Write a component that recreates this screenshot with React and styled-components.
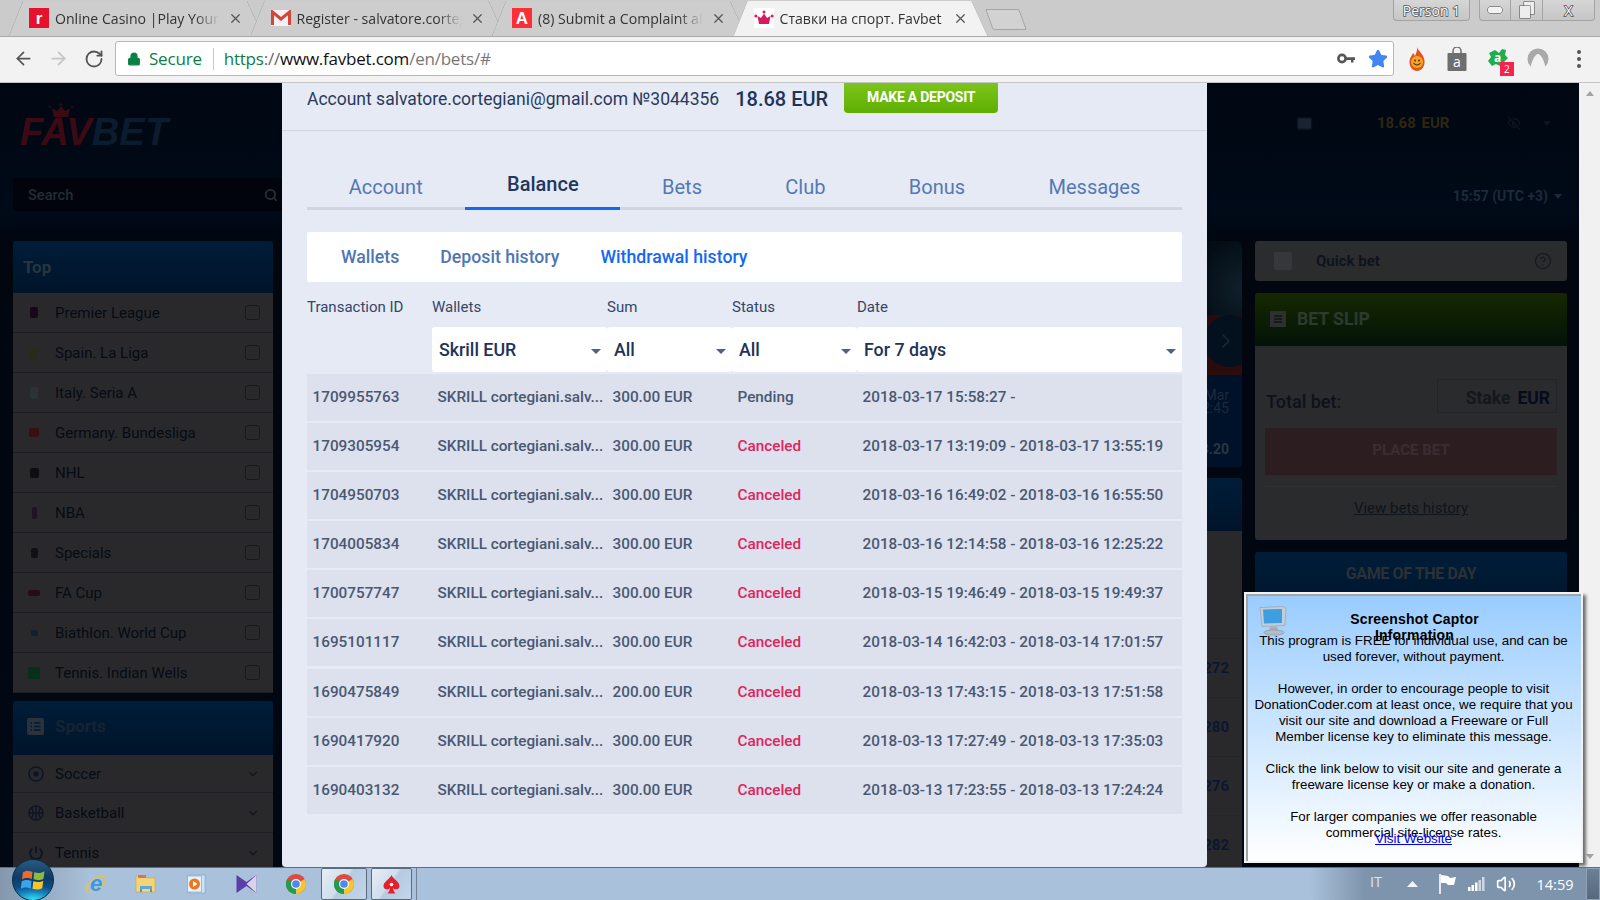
import styled, { createGlobalStyle } from 'styled-components';
import { ArrowLeft, ArrowRight, RotateCw, Lock, Star, X, Search as SearchIcon, Mail, EyeOff, ChevronRight, ChevronDown, CircleHelp, Volume2 } from 'lucide-react';

const Global = createGlobalStyle`
  html, body { margin: 0; padding: 0; background: #000; }
  * { box-sizing: border-box; }
  body { font-family: Roboto, "Liberation Sans", sans-serif; }
`;

const ROWS = [
  ['1709955763', '300.00 EUR', 'Pending', '2018-03-17 15:58:27 -'],
  ['1709305954', '300.00 EUR', 'Canceled', '2018-03-17 13:19:09 - 2018-03-17 13:55:19'],
  ['1704950703', '300.00 EUR', 'Canceled', '2018-03-16 16:49:02 - 2018-03-16 16:55:50'],
  ['1704005834', '300.00 EUR', 'Canceled', '2018-03-16 12:14:58 - 2018-03-16 12:25:22'],
  ['1700757747', '300.00 EUR', 'Canceled', '2018-03-15 19:46:49 - 2018-03-15 19:49:37'],
  ['1695101117', '300.00 EUR', 'Canceled', '2018-03-14 16:42:03 - 2018-03-14 17:01:57'],
  ['1690475849', '200.00 EUR', 'Canceled', '2018-03-13 17:43:15 - 2018-03-13 17:51:58'],
  ['1690417920', '300.00 EUR', 'Canceled', '2018-03-13 17:27:49 - 2018-03-13 17:35:03'],
  ['1690403132', '300.00 EUR', 'Canceled', '2018-03-13 17:23:55 - 2018-03-13 17:24:24'],
];

const TOP = [
  ['Premier League', '#160818', 8, 11],
  ['Spain. La Liga', '#2a2a1a', 8, 12],
  ['Italy. Seria A', '#2a3438', 8, 12],
  ['Germany. Bundesliga', '#3a0f12', 10, 9],
  ['NHL', '#0c0e12', 9, 10],
  ['NBA', '#1e1424', 5, 12],
  ['Specials', '#0f1114', 7, 10],
  ['FA Cup', '#2a0a14', 12, 6],
  ['Biathlon. World Cup', '#0c2230', 7, 6],
  ['Tennis. Indian Wells', '#04301c', 12, 12],
];

const Screen = styled.div`
  position: relative;
  width: 1600px;
  height: 900px;
  overflow: hidden;
  display: flex;
  flex-direction: column;
`;

/* browser chrome */
const TabStrip = styled.div`
  height: 36px;
  flex: none;
  background: #cbcbcb;
  display: flex;
  padding-left: 9px;
`;

const Tab = styled.div`
  position: relative;
  width: 256px;
  height: 36px;
  margin-right: -14.5px;
  display: flex;
  align-items: center;
  padding: 0 20px;
  z-index: ${p => (p.$active ? 2 : 1)};
  filter: drop-shadow(0 0 0.7px #666);

  &::before {
    content: '';
    position: absolute;
    inset: 1px 0 0 0;
    background: ${p => (p.$active ? '#f2f2f2' : '#cdcdcd')};
    clip-path: polygon(0 100%, 14px 0, 238px 0, 254px 100%);
  }
`;

const Favicon = styled.span`
  position: relative;
  flex: none;
  width: 20px;
  height: 20px;
  margin-right: 6px;
  display: grid;
  place-items: center;
`;

const TabTitle = styled.span`
  position: relative;
  flex: 1;
  min-width: 0;
  white-space: nowrap;
  overflow: hidden;
  font: 14.1px "Open Sans", sans-serif;
  color: #333;
  -webkit-mask-image: ${p => (p.$plain ? 'none' : 'linear-gradient(90deg, #000 85%, transparent)')};
  mask-image: ${p => (p.$plain ? 'none' : 'linear-gradient(90deg, #000 85%, transparent)')};
`;

const TabClose = styled(X)`
  position: relative;
  flex: none;
  margin-left: 8px;
  margin-right: 2px;
  color: #555;
`;

const NewTab = styled.div`
  width: 34px;
  height: 21px;
  margin: 9px 0 0 14px;
  background: #d2d2d2;
  border: 1px solid #a4a4a4;
  border-radius: 2px;
  transform: skewX(20deg);
`;

const WindowArea = styled.div`
  margin-left: auto;
  display: flex;
  align-items: flex-start;
  padding-right: 5px;
`;

const GlassButton = styled.div`
  height: 21px;
  display: flex;
  align-items: center;
  justify-content: center;
  background: linear-gradient(#d6d6d6, #c6c6c6);
  border: 1px solid #a3a3a3;
  border-top: none;
  border-radius: 0 0 4px 4px;
  font: 14px "Open Sans", sans-serif;
  color: #fff;
  -webkit-text-stroke: 1.6px #555;
  paint-order: stroke fill;
`;

const PersonButton = styled(GlassButton)`
  width: 77px;
  margin-right: 9px;
`;

const WinControl = styled(GlassButton)`
  width: ${p => p.$w}px;
  border-radius: ${p => p.$r || '0'};
  border-left: ${p => (p.$first ? '1px solid #a3a3a3' : 'none')};
`;

const Toolbar = styled.div`
  height: 47px;
  flex: none;
  background: #f2f2f2;
  border-top: 1px solid #a8a8a8;
  border-bottom: 1px solid #c4c4c4;
  display: flex;
  align-items: center;
  padding: 0 0 2px 6px;
`;

const NavIcon = styled.span`
  width: 35px;
  display: grid;
  place-items: center;
  color: ${p => p.$c || '#555'};
`;

const Omnibox = styled.div`
  width: 1279px;
  height: 35px;
  margin-left: 4px;
  background: #fff;
  border: 1px solid #b8b8b8;
  border-radius: 3px;
  display: flex;
  align-items: center;
  padding: 0 5px 0 11px;
  font: 17px "Open Sans", sans-serif;
`;

const SecureText = styled.span`
  color: #0b8043;
  margin-left: 8px;
  padding-right: 11px;
  border-right: 1px solid #c8c8c8;
  height: 22px;
  line-height: 22px;
  margin-right: 10px;
  letter-spacing: -0.2px;
`;

const UrlPart = styled.span`
  color: ${p => p.$c};
  letter-spacing: -0.22px;
`;

const OmniIcons = styled.div`
  margin-left: auto;
  display: flex;
  align-items: center;
  gap: 12px;
`;

const ExtIcons = styled.div`
  display: flex;
  align-items: center;
  margin-left: 12px;
  gap: 18.4px;
`;

const ExtIcon = styled.span`
  position: relative;
  width: 22px;
  height: 24px;
  display: grid;
  place-items: center;
`;

const ExtBadge = styled.span`
  position: absolute;
  right: -5px;
  bottom: -5px;
  width: 14px;
  height: 14px;
  background: #f5234e;
  color: #fff;
  font: 10px/14px "Open Sans", sans-serif;
  text-align: center;
`;

/* dimmed page behind the dialog */
const Viewport = styled.div`
  position: relative;
  flex: 1;
  min-height: 0;
  display: flex;
`;

const Backdrop = styled.div`
  flex: 1;
  min-width: 0;
  overflow: hidden;
  display: flex;
  background: linear-gradient(#010712 0, #000a18 130px, #01060f 160px, #010814 100%);
`;

const Scrollbar = styled.div`
  width: 21px;
  flex: none;
  background: #f1f1f1;
  display: flex;
  flex-direction: column;
  justify-content: space-between;
  align-items: center;
  padding: 8px 0 8px;
`;

const ScrollArrow = styled.span`
  width: 0;
  height: 0;
  border-left: 4.5px solid transparent;
  border-right: 4.5px solid transparent;
  border-bottom: ${p => (p.$down ? 'none' : '5px solid #a3a3a3')};
  border-top: ${p => (p.$down ? '5px solid #a3a3a3' : 'none')};
`;

const LeftCol = styled.div`
  width: 282px;
  flex: none;
  padding-left: 13px;
`;

const Logo = styled.div`
  position: relative;
  height: 95px;
  padding: 30px 0 0 7px;
  font: italic 700 38px/38px "Liberation Sans", sans-serif;
  letter-spacing: 0.2px;
  color: #0a1c2e;
`;

const LogoRed = styled.span`
  color: #3c0a15;
`;

const LogoCrown = styled.svg`
  position: absolute;
  left: 35px;
  top: 20px;
`;

const SearchBox = styled.div`
  width: 269px;
  height: 33px;
  background: #01040c;
  display: flex;
  align-items: center;
  justify-content: space-between;
  padding: 0 4px 0 15px;
  font-size: 14.6px;
  font-weight: 500;
  color: #252c36;
`;

const SideList = styled.div`
  width: 260px;
  margin-top: 30px;
`;

const SideHead = styled.div`
  height: ${p => p.$h}px;
  background: linear-gradient(#001d38, #00142a);
  border-radius: 3px 3px 0 0;
  display: flex;
  align-items: center;
  gap: 11px;
  padding-left: ${p => p.$pl}px;
  padding-bottom: ${p => p.$pb || 0}px;
  font-size: 17px;
  font-weight: 700;
  color: ${p => p.$c};
`;

const SideRow = styled.div`
  height: ${p => p.$h || 40}px;
  background: #29292b;
  border-bottom: 1px solid #1e1f22;
  display: flex;
  align-items: center;
  padding: 0 13px 0 15px;
  font-size: 15px;
  color: #060b14;
`;

const SideDotBox = styled.span`
  width: 12px;
  margin-right: 15px;
  flex: none;
  display: grid;
  place-items: center;
`;

const SideDot = styled.span`
  display: block;
  border-radius: 2px;
`;

const SideIconWrap = styled.span`
  width: 27px;
  display: flex;
  flex: none;
  color: #0c1626;
`;

const SideCaret = styled(ChevronDown)`
  margin-left: auto;
  color: #10141a;
`;

const Check = styled.span`
  margin-left: auto;
  width: 15px;
  height: 15px;
  border: 1.5px solid #15181d;
  border-radius: 3px;
`;

const SideGap = styled.div`
  height: 8px;
`;

const Center = styled.div`
  flex: 1;
  min-width: 0;
  padding-top: 158px;
  display: flex;
  flex-direction: column;
  padding-right: 13px;
`;

const Hero = styled.div`
  position: relative;
  height: 134px;
  flex: none;
  border-radius: 0 6px 0 0;
  background:
    radial-gradient(ellipse 60px 70px at 100% 35%, #10202a 0, #06121c 55%, transparent 100%),
    #02060c;
  overflow: hidden;
`;

const HeroShirt = styled.div`
  position: absolute;
  left: 0;
  right: 0;
  bottom: 0;
  height: 60px;
  background: linear-gradient(160deg, #16050a 0, #24090c 60%, #2c0c0c 100%);
`;

const HeroArrow = styled.div`
  position: absolute;
  right: -14px;
  bottom: 8px;
  width: 52px;
  height: 52px;
  border-radius: 50%;
  background: #03101e;
  color: #1a2634;
  display: flex;
  align-items: center;
  padding-left: 10px;
`;

const MatchInfo = styled.div`
  height: 92px;
  flex: none;
  background: #00112a;
  text-align: right;
  padding: 14px 13px 0 0;
  font-size: 14px;
  line-height: 13px;
  color: #1c2b3d;
`;

const MatchOdd = styled.div`
  margin-top: 28px;
  font-weight: 700;
  color: #2c3540;
`;

const CenterHead = styled.div`
  height: 53px;
  flex: none;
  margin-top: 11px;
  background: linear-gradient(#001d38, #00142a);
  border-radius: 0 3px 0 0;
`;

const CenterRows = styled.div`
  background: #29292b;
  padding-top: 107px;
  flex: 1;
`;

const OddRow = styled.div`
  height: 59px;
  padding: 0 13px;
  text-align: right;
  font-size: 15px;
  line-height: 59px;
  font-weight: 700;
  color: #0b1730;
  border-top: 1px solid #242527;
`;

const RightCol = styled.div`
  width: 312px;
  flex: none;
  margin-right: 12px;
  display: flex;
  flex-direction: column;
`;

const AccountRow = styled.div`
  height: 80px;
  display: flex;
  align-items: center;
  padding: 0 0 0 41px;
  color: #0c1522;
`;

const TopBalance = styled.span`
  margin-left: 64px;
  font-size: 15px;
  font-weight: 700;
  color: #2e2610;
  word-spacing: 2px;
`;

const TopEye = styled.span`
  margin-left: 58px;
  display: flex;
  color: #0f1720;
`;

const TopCaret = styled.span`
  margin-left: 22px;
  width: 0;
  height: 0;
  border-left: 4px solid transparent;
  border-right: 4px solid transparent;
  border-top: 5px solid #0f1720;
`;

const TimeRow = styled.div`
  height: 78px;
  display: flex;
  align-items: flex-start;
  justify-content: flex-end;
  gap: 6px;
  padding-top: 25px;
  padding-right: 5px;
  font-size: 14px;
  font-weight: 700;
  color: #1c2a3a;
`;

const TimeCaret = styled.span`
  margin-top: 6px;
  width: 0;
  height: 0;
  border-left: 4px solid transparent;
  border-right: 4px solid transparent;
  border-top: 5px solid #1c2a3a;
`;

const QuickBet = styled.div`
  height: 40px;
  flex: none;
  background: #2b2c2e;
  border-radius: 3px;
  display: flex;
  align-items: center;
  padding: 0 15px 0 19px;
  font-size: 15px;
  font-weight: 700;
  color: #0e141d;
`;

const QuickToggle = styled.span`
  width: 18px;
  height: 18px;
  background: #36373a;
  border-radius: 2px;
  margin-right: 24px;
`;

const QuickHelp = styled(CircleHelp)`
  margin-left: auto;
  color: #14171c;
`;

const SlipHead = styled.div`
  height: 53px;
  flex: none;
  margin-top: 12px;
  border-radius: 3px 3px 0 0;
  background: linear-gradient(#162800, #021308);
  display: flex;
  align-items: center;
  gap: 11px;
  padding: 0 0 2px 15px;
  font-size: 17.6px;
  font-weight: 700;
  color: #2c3a30;
`;

const SlipBody = styled.div`
  height: 194px;
  flex: none;
  background: #2a2b2d;
  border-radius: 0 0 3px 3px;
  padding: 33px 10px 0;
`;

const SlipTotal = styled.div`
  display: flex;
  justify-content: space-between;
  align-items: flex-end;
  font-size: 18px;
  line-height: 22px;
  font-weight: 500;
  color: #0c121c;
  padding-left: 1px;
`;

const StakeBox = styled.div`
  width: 120px;
  height: 34px;
  border: 1px solid #212428;
  display: flex;
  align-items: center;
  justify-content: flex-end;
  gap: 7px;
  padding: 4px 6px 0 0;
  font-size: 17.5px;
  font-weight: 700;
  color: #14171b;
`;

const StakeCur = styled.span`
  color: #050c1e;
`;

const PlaceBet = styled.div`
  height: 47px;
  margin-top: 15px;
  background: #2c1d21;
  display: grid;
  place-items: center;
  padding-bottom: 3px;
  font-size: 15px;
  font-weight: 700;
  color: #3b2e33;
`;

const HistoryLink = styled.div`
  margin-top: 11px;
  padding-top: 12px;
  border-top: 1px solid #2f3032;
  text-align: center;
  font-size: 15px;
  line-height: 18px;
  color: #0f131a;
  text-decoration: underline;
`;

const GameHead = styled.div`
  height: 80px;
  flex: none;
  margin-top: 12px;
  border-radius: 3px 3px 0 0;
  background: linear-gradient(#001d38, #00132a);
  padding-top: 12px;
  text-align: center;
  font-size: 16px;
  font-weight: 700;
  letter-spacing: -0.38px;
  color: #2b3136;
`;

/* dialog */
const Modal = styled.div`
  position: absolute;
  left: 282px;
  top: 0;
  bottom: 0;
  width: 925px;
  background: #e6eaf4;
  border-radius: 0 0 4px 4px;
`;

const AccountBar = styled.div`
  height: 48px;
  border-bottom: 1px solid #d2d6df;
  padding-left: 25px;
  display: flex;
  align-items: flex-start;
  color: #293a5c;
`;

const AccountText = styled.span`
  font-size: 17.5px;
  line-height: 30px;
  margin-top: 1px;
`;

const AccountSum = styled.span`
  font-size: 20px;
  font-weight: 500;
  line-height: 30px;
  margin: 1px 16px 0 16px;
  color: #1e3358;
`;

const DepositButton = styled.div`
  width: 154px;
  height: 30px;
  padding-bottom: 3px;
  background: linear-gradient(#7cc51c, #5fae02);
  border-radius: 0 0 4px 4px;
  display: grid;
  place-items: center;
  font-size: 14px;
  font-weight: 700;
  letter-spacing: -0.25px;
  color: #fff;
`;

const Content = styled.div`
  padding: 35px 25px 0;
`;

const TabList = styled.div`
  display: flex;
  height: 44px;
  border-bottom: 3px solid #d0d5df;
`;

const ProfileTab = styled.div`
  height: 44px;
  padding: ${p => (p.$active ? '5px' : '8px')} 41.7px 0;
  border-bottom: 3px solid ${p => (p.$active ? '#1568f0' : 'transparent')};
  font-size: 20px;
  line-height: 26px;
  font-weight: ${p => (p.$active ? 500 : 400)};
  color: ${p => (p.$active ? '#21375f' : '#5479b4')};

  &:first-child {
    padding-right: 42.7px;
  }
`;

const SubNav = styled.div`
  margin-top: 22px;
  height: 50px;
  background: #fff;
  border-radius: 2px;
  display: flex;
  align-items: center;
  gap: 41px;
  padding: 0 0 0 34px;
  font-size: 17.7px;
  font-weight: 500;
`;

const SubLink = styled.span`
  color: ${p => (p.$active ? '#1568f0' : '#4f76b4')};
`;

const Columns = styled.div`
  display: grid;
  grid-template-columns: 125px 175px 125px 125px 1fr;
`;

const HeadRow = styled(Columns)`
  height: 45px;
  padding-top: 4px;
  align-items: center;
  font-size: 15px;
  color: #34466a;
`;

const FilterRow = styled(Columns)`
  height: 45px;
`;

const Filter = styled.div`
  grid-column: ${p => p.$col || 'auto'};
  background: #fff;
  border-radius: 3px;
  display: flex;
  align-items: center;
  justify-content: space-between;
  padding: 0 6px 0 7px;
  font-size: 17.8px;
  font-weight: 500;
  color: #1e3358;
`;

const Caret = styled.span`
  margin-top: 4px;
  width: 0;
  height: 0;
  border-left: 5px solid transparent;
  border-right: 5px solid transparent;
  border-top: 5px solid #4d6285;
`;

const Rows = styled.div`
  margin-top: 2px;
  display: flex;
  flex-direction: column;
  gap: 2.1px;
`;

const Row = styled(Columns)`
  height: 47px;
  padding-bottom: 1px;
  align-items: center;
  background: #dce1ed;
  font-size: 15.3px;
  font-weight: 500;
  color: #4a5872;
`;

const Cell = styled.span`
  padding-left: 5.5px;
  white-space: nowrap;
  color: ${p => (p.$status === 'Canceled' ? '#e0245e' : 'inherit')};
`;

/* screenshot tool popup */
const Popup = styled.div`
  position: absolute;
  left: 1244px;
  top: 592px;
  width: 339px;
  height: 271px;
  border: 2px solid #f2f2f2;
  box-shadow: inset 2px 2px 0 #a5a5a5, 3px 3px 3px rgba(0, 0, 0, 0.55);
  background: linear-gradient(#99ccff, #ffffff);
  padding: 17px 5px 0;
  text-align: center;
  font-family: "Liberation Sans", sans-serif;
  color: #000;
`;

const PopupIcon = styled.svg`
  position: absolute;
  left: 13px;
  top: 11px;
`;

const PopupTitle = styled.div`
  height: 22px;
  padding: 0 76px 0 78px;
  font-size: 14px;
  font-weight: 700;
  line-height: 16px;
  letter-spacing: 0.2px;
`;

const PopupText = styled.div`
  font-size: 13.35px;
  line-height: 16px;
  white-space: pre-line;
`;

const PopupLink = styled.div`
  margin-top: -10px;
  position: relative;
  font-size: 13.4px;
  line-height: 16px;
  color: #0000ee;
  text-decoration: underline;
`;

/* windows taskbar */
const Taskbar = styled.div`
  height: 33px;
  flex: none;
  position: relative;
  display: flex;
  align-items: center;
  padding-left: 71px;
  border-top: 1px solid #5e6f82;
  background: linear-gradient(90deg, #8397ad 0, #a9c1da 90px, #a9c1da 1310px, #7e94ac 1365px, #7e94ac 100%);
`;

const StartOrb = styled.div`
  position: absolute;
  left: 12px;
  top: -9px;
  width: 42px;
  height: 42px;
  border-radius: 50%;
  border: 1px solid #0c2a40;
  background:
    radial-gradient(ellipse 30px 14px at 50% 100%, #39e4f5 0, rgba(24, 150, 210, 0.7) 60%, transparent 100%),
    linear-gradient(#2a5a80 0, #0d3a66 45%, #0a6aa8 100%);
  display: grid;
  place-items: center;
`;

const PinIcon = styled.span`
  width: 50px;
  height: 30px;
  display: grid;
  place-items: center;
  flex: none;
`;

const RunningApp = styled.span`
  position: relative;
  width: ${p => p.$w}px;
  height: 32px;
  margin-right: 4px;
  flex: none;
  display: grid;
  place-items: center;
  border: 1px solid #5a6b7e;
  border-radius: 2px;
  background: linear-gradient(125deg, #e6eef6 0, #cfdeec 45%, #b5cbe2 50%, #c3d6e9 100%);
`;

const TaskSep = styled.span`
  width: 1px;
  height: 32px;
  background: #6f8296;
`;

const Tray = styled.div`
  margin-left: auto;
  display: flex;
  align-items: center;
  height: 100%;
  color: #fff;
  font: 14.5px "Open Sans", sans-serif;
`;

const TrayLabel = styled.span`
  width: ${p => p.$w}px;
  padding-left: ${p => p.$pl || 0}px;
  padding-bottom: ${p => p.$pb || 0}px;
  text-align: center;
  opacity: ${p => p.$o || 1};
`;

const TrayIcon = styled.span`
  width: ${p => p.$w}px;
  display: grid;
  place-items: center;
`;

const ShowDesktop = styled.span`
  width: 14px;
  height: 32px;
  background: linear-gradient(#6c8096, #56687c);
  border: 1px solid #8fa2b5;
`;

const ChromeIcon = ({ size = 22 }) => (
  <svg width={size} height={size} viewBox="0 0 24 24">
    <circle cx="12" cy="12" r="11" fill="#dd4b3e" />
    <path d="M12 12 L21.5 6.5 A11 11 0 0 1 12 23 Z" fill="#f7c52e" />
    <path d="M12 12 L12 23 A11 11 0 0 1 2.5 6.5 Z" fill="#1f9e4e" />
    <circle cx="12" cy="12" r="5.4" fill="#fff" />
    <circle cx="12" cy="12" r="4.2" fill="#4a89f3" />
  </svg>
);

const Flag = () => (
  <svg width="33" height="30" viewBox="0 0 24 24">
    <path d="M3.5 6 C7 3.5 9 5 11.2 5.5 L10.6 11.2 C8.5 10.6 6 9.6 2.8 11.6 Z" fill="#ee6a2c" />
    <path d="M12.6 5.8 C15 6.4 17.5 7 20.8 5 L20 11 C17 12.8 14.5 12 12 11.4 Z" fill="#8fbb3c" />
    <path d="M2.6 13 C6 11.2 8 12 10.4 12.7 L9.8 18.8 C7.5 18 5 17.2 1.8 19 Z" fill="#3ca4ea" />
    <path d="M11.8 13 C14.5 13.6 17 14.2 19.8 12.5 L19 18.6 C16 20.2 13.6 19.6 11.2 19 Z" fill="#f8c52c" />
  </svg>
);

const Gmail = () => (
  <svg width="20" height="16" viewBox="0 0 20 16">
    <rect width="20" height="16" rx="1" fill="#f2f2f2" />
    <path d="M1.5 15 V2 L10 9 L18.5 2 V15" fill="none" stroke="#d5453a" strokeWidth="3" />
  </svg>
);

const Crown = ({ size = 20 }) => (
  <svg width={size} height={size} viewBox="0 0 20 20">
    <rect width="20" height="20" fill="#fff" />
    <path d="M3.5 8 L7 10 L10 5.5 L13 10 L16.5 8 L15 16 H5 Z" fill="#d81b60" />
    <circle cx="10" cy="4" r="1.5" fill="#d81b60" />
    <circle cx="1.8" cy="8" r="1.5" fill="#d81b60" />
    <circle cx="18.2" cy="8" r="1.5" fill="#d81b60" />
  </svg>
);

const RedSquare = ({ color, letter }) => (
  <svg width="20" height="20" viewBox="0 0 20 20">
    <rect width="20" height="20" fill={color} />
    <text x="10" y="16" textAnchor="middle" fontFamily="Liberation Sans" fontWeight="700" fontSize="17" fill="#fff">
      {letter}
    </text>
  </svg>
);

const KeyIcon = () => (
  <svg width="19" height="11" viewBox="0 0 19 11">
    <circle cx="5" cy="5.5" r="3.6" fill="none" stroke="#555" strokeWidth="2.6" />
    <path d="M8 4.2 H18 V7 H16.5 V9.5 H14 V7 H8 Z" fill="#555" />
  </svg>
);

const Flame = () => (
  <svg width="18" height="24" viewBox="0 0 18 24">
    <path d="M9 0 C10 4 16 7 16.5 14 C17 20 13 24 9 24 C5 24 1 20 1.5 14 C2 10 4 9 5 6 C6 7 6.5 8 7 9 C8 6 9.5 4 9 0 Z" fill="#e2541b" />
    <circle cx="9" cy="15" r="6" fill="#f5a623" />
    <circle cx="7" cy="13.5" r="0.9" fill="#4a2a08" />
    <circle cx="11" cy="13.5" r="0.9" fill="#4a2a08" />
    <path d="M5.5 16 Q9 20 12.5 16" fill="none" stroke="#4a2a08" strokeWidth="1.1" />
  </svg>
);

const BagIcon = () => (
  <svg width="20" height="24" viewBox="0 0 20 24">
    <path d="M6 7 V4 A4 4 0 0 1 14 4 V7" fill="none" stroke="#6e6e6e" strokeWidth="1.5" />
    <rect x="0.5" y="6" width="19" height="18" rx="1" fill="#6e6e6e" />
    <text x="10" y="20" textAnchor="middle" fontFamily="Open Sans" fontSize="14" fill="#fff">a</text>
  </svg>
);

const Splat = () => (
  <svg width="22" height="22" viewBox="0 0 22 22">
    <path d="M8 2 L12 5 L15 1 L19 2 L18 7 L21 10 L17 14 L15 19 L9 16 L5 18 L1 13 L4 9 L2 5 Z" fill="#1fae4b" />
    <text x="10.5" y="14" textAnchor="middle" fontFamily="Open Sans" fontSize="12" fontWeight="700" fill="#fff">a</text>
  </svg>
);

const ArcIcon = () => (
  <svg width="22" height="22" viewBox="0 0 22 22">
    <circle cx="11" cy="11" r="10.5" fill="#a9a9a9" />
    <path d="M3 22 C5 10 9 6 11 6 C13 6 17 10 19 22 Z" fill="#f2f2f2" />
  </svg>
);

const Dots = () => (
  <svg width="6" height="20" viewBox="0 0 6 20">
    <circle cx="3" cy="3" r="2" fill="#555" />
    <circle cx="3" cy="10" r="2" fill="#555" />
    <circle cx="3" cy="17" r="2" fill="#555" />
  </svg>
);

const SlipIcon = () => (
  <svg width="16" height="16" viewBox="0 0 16 16">
    <rect width="16" height="16" fill="#2e2f30" />
    <path d="M4 5 H12 M4 8 H12 M4 11 H12" stroke="#0b1a10" strokeWidth="1.4" />
  </svg>
);

const SportsIcon = () => (
  <svg width="17" height="17" viewBox="0 0 17 17">
    <rect width="17" height="17" rx="2" fill="#2a333c" />
    <path d="M3.5 5 H5 M7 5 H13.5 M3.5 8.5 H5 M7 8.5 H13.5 M3.5 12 H5 M7 12 H13.5" stroke="#001a30" strokeWidth="1.4" />
  </svg>
);

const SoccerIcon = () => (
  <svg width="16" height="16" viewBox="0 0 16 16" fill="none" stroke="currentColor" strokeWidth="1.6">
    <circle cx="8" cy="8" r="7" />
    <circle cx="8" cy="8" r="2" fill="currentColor" />
  </svg>
);

const BasketIcon = () => (
  <svg width="16" height="16" viewBox="0 0 16 16" fill="none" stroke="currentColor" strokeWidth="1.4">
    <circle cx="8" cy="8" r="7" />
    <path d="M1 8 H15 M8 1 V15 M3.5 3 Q7 8 3.5 13 M12.5 3 Q9 8 12.5 13" />
  </svg>
);

const TennisIcon = () => (
  <svg width="16" height="16" viewBox="0 0 16 16" fill="none" stroke="currentColor" strokeWidth="2">
    <path d="M4.5 3.5 A6 6 0 1 0 11.5 3.5" />
    <path d="M8 1 V8" />
  </svg>
);

const CrownMark = () => (
  <LogoCrown width="26" height="16" viewBox="0 0 26 16">
    <path d="M6 14 L4 5 L9 8 L13 3 L17 8 L22 5 L20 14 Z" fill="#3c0a15" />
    <circle cx="13" cy="1.5" r="1.2" fill="#3c0a15" />
    <circle cx="2" cy="4" r="1" fill="#3c0a15" />
    <circle cx="24" cy="4" r="1" fill="#3c0a15" />
  </LogoCrown>
);

const Monitor = () => (
  <PopupIcon width="28" height="31" viewBox="0 0 28 30">
    <path d="M1 2 L24 1 L27 3 L26 20 L3 21 Z" fill="#c4ccd4" stroke="#8a939c" strokeWidth="0.5" />
    <path d="M4 4 L23 3.5 L23 17.5 L5 18 Z" fill="#3f9ee0" />
    <path d="M11 21 H18 L19 25 H10 Z" fill="#a9b0b7" />
    <ellipse cx="15" cy="27" rx="10" ry="2.6" fill="#b6bcc2" stroke="#7c838a" strokeWidth="0.5" />
  </PopupIcon>
);

const IeIcon = () => (
  <svg width="22" height="22" viewBox="0 0 22 22">
    <ellipse cx="11" cy="11" rx="11" ry="5" fill="none" stroke="#f2c230" strokeWidth="1.4" transform="rotate(-35 11 11)" />
    <text x="11" y="18" textAnchor="middle" fontFamily="Liberation Sans" fontStyle="italic" fontWeight="700" fontSize="22" fill="#3a9ae6">e</text>
  </svg>
);

const FolderIcon = () => (
  <svg width="22" height="20" viewBox="0 0 22 20">
    <path d="M1 2 H8 L10 4 H20 V18 H1 Z" fill="#f1d578" stroke="#c9a94f" strokeWidth="0.6" />
    <rect x="3" y="1" width="8" height="3" fill="#e0734e" />
    <rect x="5" y="12" width="12" height="3" fill="#5fa7d6" />
    <path d="M6 15 V18 M16 15 V18" stroke="#4a7fa8" strokeWidth="1.5" />
  </svg>
);

const PlayIcon = () => (
  <svg width="19" height="20" viewBox="0 0 19 20">
    <rect x="3" y="1" width="15" height="18" fill="#cfe4f5" stroke="#7aa8cc" strokeWidth="0.7" />
    <rect x="0.5" y="2" width="14" height="16" fill="#e8f2fa" stroke="#7aa8cc" strokeWidth="0.7" />
    <circle cx="7.5" cy="10" r="5.5" fill="#f0741f" />
    <path d="M6 7 L10.5 10 L6 13 Z" fill="#fff" />
  </svg>
);

const VsIcon = () => (
  <svg width="21" height="20" viewBox="0 0 21 20">
    <path d="M0.5 1 L10.5 8 L20.5 1 V19 L10.5 12 L0.5 19 Z" fill="#5b3fa8" />
    <path d="M20.5 1 V19 L10.5 10 Z" fill="#d9d3ea" />
  </svg>
);

const SpadeIcon = () => (
  <svg width="17" height="19" viewBox="0 0 17 19">
    <path d="M8.5 0 C10 4 17 7 16.5 11.5 C16 15 11.5 15 10 13 C10.2 15 11 17 12.5 18.5 H4.5 C6 17 6.8 15 7 13 C5.5 15 1 15 0.5 11.5 C0 7 7 4 8.5 0 Z" fill="#e3202c" />
    <circle cx="8.5" cy="9.5" r="1.8" fill="#fff" />
  </svg>
);

const TrayFlag = () => (
  <svg width="19" height="22" viewBox="0 0 19 22">
    <path d="M2 1 V21" stroke="#fff" strokeWidth="1.6" />
    <path d="M3 2 L10 3 L12 5 L18 4 L16 12 H10 L8 10 H3 Z" fill="#fff" />
  </svg>
);

const Signal = () => (
  <svg width="17" height="14" viewBox="0 0 17 14">
    <rect x="0" y="10" width="2.5" height="4" fill="#fff" />
    <rect x="3.5" y="8" width="2.5" height="6" fill="#fff" />
    <rect x="7" y="5.5" width="2.5" height="8.5" fill="#fff" />
    <rect x="10.5" y="3" width="2.5" height="11" fill="#cfd8e2" />
    <rect x="14" y="0" width="2.5" height="14" fill="#cfd8e2" />
  </svg>
);

const TABS = ['Account', 'Balance', 'Bets', 'Club', 'Bonus', 'Messages'];

export default function App() {
  return (
    <Screen>
      <Global />
      <TabStrip>
        <Tab>
          <Favicon><RedSquare color="#e8112d" letter="r" /></Favicon>
          <TabTitle>Online Casino |Play Your Favourite</TabTitle>
          <TabClose size={15} strokeWidth={2} />
        </Tab>
        <Tab>
          <Favicon><Gmail /></Favicon>
          <TabTitle>Register - salvatore.cortegiani</TabTitle>
          <TabClose size={15} strokeWidth={2} />
        </Tab>
        <Tab>
          <Favicon><RedSquare color="#fb2f35" letter="A" /></Favicon>
          <TabTitle>(8) Submit a Complaint about</TabTitle>
          <TabClose size={15} strokeWidth={2} />
        </Tab>
        <Tab $active>
          <Favicon><Crown /></Favicon>
          <TabTitle $plain>Ставки на спорт. Favbet</TabTitle>
          <TabClose size={15} strokeWidth={2} />
        </Tab>
        <NewTab />
        <WindowArea>
          <PersonButton>Person 1</PersonButton>
          <WinControl $w={32} $first $r="0 0 0 4px">
            <svg width="16" height="8" viewBox="0 0 16 8"><rect x="1" y="1" width="14" height="6" rx="2" fill="#f2f2f2" stroke="#444" /></svg>
          </WinControl>
          <WinControl $w={32}>
            <svg width="18" height="18" viewBox="0 0 18 18"><rect x="6" y="1" width="10" height="12" fill="#eee" stroke="#444" /><rect x="2" y="5" width="10" height="12" fill="#eee" stroke="#444" /></svg>
          </WinControl>
          <WinControl $w={52} $r="0 0 4px 0">X</WinControl>
        </WindowArea>
      </TabStrip>

      <Toolbar>
        <NavIcon><ArrowLeft size={21} strokeWidth={2} /></NavIcon>
        <NavIcon $c="#c4c4c4"><ArrowRight size={21} strokeWidth={2} /></NavIcon>
        <NavIcon><RotateCw size={20} strokeWidth={2.2} /></NavIcon>
        <Omnibox>
          <Lock size={14} fill="#0b8043" color="#0b8043" strokeWidth={2.4} />
          <SecureText>Secure</SecureText>
          <UrlPart $c="#0b8043">https</UrlPart>
          <UrlPart $c="#666">://</UrlPart>
          <UrlPart $c="#111">www.favbet.com</UrlPart>
          <UrlPart $c="#777">/en/bets/#</UrlPart>
          <OmniIcons>
            <KeyIcon />
            <Star size={20} fill="#4285f4" color="#4285f4" />
          </OmniIcons>
        </Omnibox>
        <ExtIcons>
          <ExtIcon><Flame /></ExtIcon>
          <ExtIcon><BagIcon /></ExtIcon>
          <ExtIcon><Splat /><ExtBadge>2</ExtBadge></ExtIcon>
          <ExtIcon><ArcIcon /></ExtIcon>
          <ExtIcon><Dots /></ExtIcon>
        </ExtIcons>
      </Toolbar>

      <Viewport>
        <Backdrop>
          <LeftCol>
            <Logo>
              <CrownMark />
              <LogoRed>FAV</LogoRed>BET
            </Logo>
            <SearchBox>
              Search
              <SearchIcon size={14} strokeWidth={3} color="#2a2f38" />
            </SearchBox>
            <SideList>
              <SideHead $h={52} $pl={10} $c="#2a3440">Top</SideHead>
              {TOP.map(([name, c, w, h]) => (
                <SideRow key={name}>
                  <SideDotBox>
                    <SideDot style={{ width: w, height: h, background: c }} />
                  </SideDotBox>
                  {name}
                  <Check />
                </SideRow>
              ))}
              <SideGap />
              <SideHead $h={54} $pl={14} $pb={4} $c="#152433"><SportsIcon /> Sports</SideHead>
              <SideRow $h={38}>
                <SideIconWrap><SoccerIcon /></SideIconWrap>Soccer
                <SideCaret size={14} />
              </SideRow>
              <SideRow>
                <SideIconWrap><BasketIcon /></SideIconWrap>Basketball
                <SideCaret size={14} />
              </SideRow>
              <SideRow>
                <SideIconWrap><TennisIcon /></SideIconWrap>Tennis
                <SideCaret size={14} />
              </SideRow>
            </SideList>
          </LeftCol>

          <Center>
            <Hero>
              <HeroShirt />
              <HeroArrow><ChevronRight size={24} strokeWidth={1.6} /></HeroArrow>
            </Hero>
            <MatchInfo>
              Mar<br />12:45
              <MatchOdd>3.20</MatchOdd>
            </MatchInfo>
            <CenterHead />
            <CenterRows>
              <OddRow>272</OddRow>
              <OddRow>280</OddRow>
              <OddRow>276</OddRow>
              <OddRow>282</OddRow>
            </CenterRows>
          </Center>

          <RightCol>
            <AccountRow>
              <Mail size={17} fill="#1a2430" color="#0a1420" />
              <TopBalance>18.68 EUR</TopBalance>
              <TopEye><EyeOff size={14} /></TopEye>
              <TopCaret />
            </AccountRow>
            <TimeRow>15:57 (UTC +3)<TimeCaret /></TimeRow>
            <QuickBet>
              <QuickToggle />
              Quick bet
              <QuickHelp size={18} strokeWidth={1.6} />
            </QuickBet>
            <SlipHead><SlipIcon /> BET SLIP</SlipHead>
            <SlipBody>
              <SlipTotal>
                Total bet:
                <StakeBox>Stake <StakeCur>EUR</StakeCur></StakeBox>
              </SlipTotal>
              <PlaceBet>PLACE BET</PlaceBet>
              <HistoryLink>View bets history</HistoryLink>
            </SlipBody>
            <GameHead>GAME OF THE DAY</GameHead>
          </RightCol>
        </Backdrop>
        <Scrollbar>
          <ScrollArrow />
          <ScrollArrow $down />
        </Scrollbar>

        <Modal>
          <AccountBar>
            <AccountText>Account salvatore.cortegiani@gmail.com №3044356</AccountText>
            <AccountSum>18.68 EUR</AccountSum>
            <DepositButton>MAKE A DEPOSIT</DepositButton>
          </AccountBar>
          <Content>
            <TabList>
              {TABS.map(t => (
                <ProfileTab key={t} $active={t === 'Balance'}>{t}</ProfileTab>
              ))}
            </TabList>
            <SubNav>
              <SubLink>Wallets</SubLink>
              <SubLink>Deposit history</SubLink>
              <SubLink $active>Withdrawal history</SubLink>
            </SubNav>
            <HeadRow>
              <span>Transaction ID</span>
              <span>Wallets</span>
              <span>Sum</span>
              <span>Status</span>
              <span>Date</span>
            </HeadRow>
            <FilterRow>
              <Filter $col="2">Skrill EUR<Caret /></Filter>
              <Filter>All<Caret /></Filter>
              <Filter>All<Caret /></Filter>
              <Filter>For 7 days<Caret /></Filter>
            </FilterRow>
            <Rows>
              {ROWS.map(([id, sum, status, date]) => (
                <Row key={id}>
                  <Cell>{id}</Cell>
                  <Cell>SKRILL cortegiani.salv...</Cell>
                  <Cell>{sum}</Cell>
                  <Cell $status={status}>{status}</Cell>
                  <Cell>{date}</Cell>
                </Row>
              ))}
            </Rows>
          </Content>
        </Modal>
      </Viewport>

      <Popup>
        <Monitor />
        <PopupTitle>Screenshot Captor Information</PopupTitle>
        <PopupText>{`This program is FREE for individual use, and can be
used forever, without payment.

However, in order to encourage people to visit
DonationCoder.com at least once, we require that you
visit our site and download a Freeware or Full
Member license key to eliminate this message.

Click the link below to visit our site and generate a
freeware license key or make a donation.

For larger companies we offer reasonable
commercial site-license rates.`}</PopupText>
        <PopupLink>Visit Website</PopupLink>
      </Popup>

      <Taskbar>
        <StartOrb><Flag /></StartOrb>
        <PinIcon><IeIcon /></PinIcon>
        <PinIcon><FolderIcon /></PinIcon>
        <PinIcon><PlayIcon /></PinIcon>
        <PinIcon><VsIcon /></PinIcon>
        <PinIcon><ChromeIcon /></PinIcon>
        <RunningApp $w={46}><ChromeIcon /></RunningApp>
        <RunningApp $w={41}><SpadeIcon /></RunningApp>
        <TaskSep />
        <Tray>
          <TrayLabel $w={24} $o={0.75} $pb={6}>IT</TrayLabel>
          <TrayIcon $w={48}>
            <svg width="11" height="6" viewBox="0 0 11 6"><path d="M0 6 L5.5 0 L11 6 Z" fill="#f2f5f8" /></svg>
          </TrayIcon>
          <TrayIcon $w={22}><TrayFlag /></TrayIcon>
          <TrayIcon $w={36}><Signal /></TrayIcon>
          <TrayIcon $w={24}><Volume2 size={20} color="#fff" /></TrayIcon>
          <TrayLabel $w={68} $pl={6}>14:59</TrayLabel>
          <ShowDesktop />
        </Tray>
      </Taskbar>
    </Screen>
  );
}
